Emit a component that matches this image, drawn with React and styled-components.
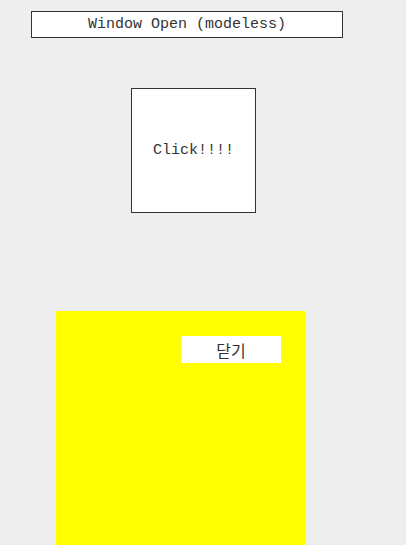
import React, { useState } from 'react';
import styled, { createGlobalStyle } from 'styled-components';

const GlobalStyle = createGlobalStyle`
  html, body {
    margin: 0;
    padding: 0;
    background: #ffffff;
    overflow: hidden;
  }
`;

const Page = styled.div`
  width: 406px;
  height: 545px;
  background: #eeeeee;
  display: flex;
  flex-direction: column;
  align-items: flex-start;
  overflow: hidden;
`;

const OutlineButton = styled.button`
  box-sizing: border-box;
  flex-shrink: 0;
  margin: ${props => props.$margin};
  width: ${props => props.$w}px;
  height: ${props => props.$h}px;
  padding: 0;
  background: #ffffff;
  border: 1px solid #333333;
  color: #333333;
  font-family: "Liberation Mono", "Courier New", monospace;
  font-size: 15px;
  cursor: pointer;
`;

const ModelessWindow = styled.div`
  box-sizing: border-box;
  margin: 98px 0 0 56px;
  width: 250px;
  height: 250px;
  flex-shrink: 0;
  background: #ffff00;
  padding: 25px 0 0 125px;
`;

const CloseButton = styled.button`
  display: block;
  width: 100px;
  height: 27px;
  padding: 0;
  border: none;
  background: #ffffff;
  color: #333333;
  font-family: "Noto Sans CJK KR", "Noto Sans", sans-serif;
  font-size: 16px;
  cursor: pointer;
`;

const App = () => {
  const [open, setOpen] = useState(true);
  return (
    <>
      <GlobalStyle />
      <Page>
        <OutlineButton $margin="11px 0 0 31px" $w={312} $h={27} onClick={() => setOpen(true)}>
          Window Open (modeless)
        </OutlineButton>
        <OutlineButton $margin="50px 0 0 131px" $w={125} $h={125}>
          Click!!!!
        </OutlineButton>
        {open && (
          <ModelessWindow>
            <CloseButton onClick={() => setOpen(false)}>닫기</CloseButton>
          </ModelessWindow>
        )}
      </Page>
    </>
  );
};

export default App;
